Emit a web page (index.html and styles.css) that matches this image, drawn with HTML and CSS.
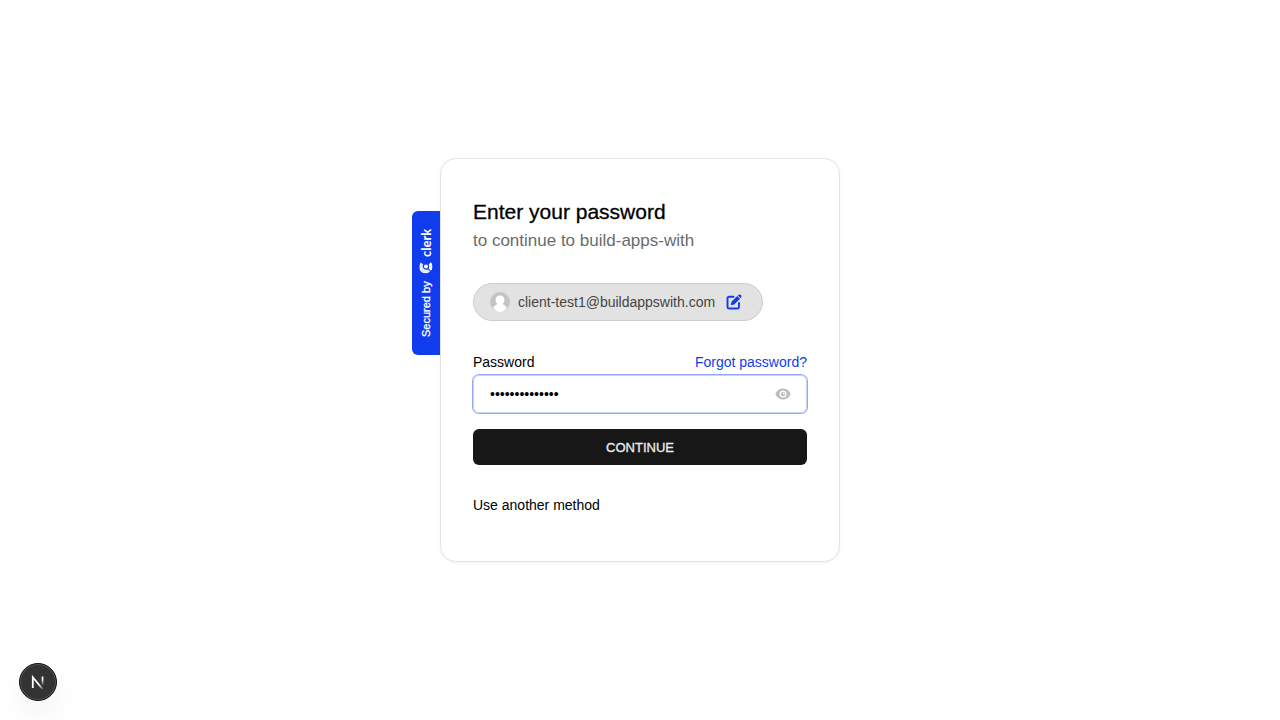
FILE: index.html
```html
<!DOCTYPE html>
<html lang="en">
<head>
<meta charset="utf-8">
<meta name="viewport" content="width=device-width, initial-scale=1">
<title>Sign in</title>
<link rel="stylesheet" href="styles.css">
</head>
<body>
<main class="page">
  <section class="card">
    <div class="badge">
      <span class="badge-text">Secured by</span>
      <a class="clerk" href="#" aria-label="clerk">
        <svg class="clerk-mark" viewBox="0 0 14 14" aria-hidden="true">
          <circle cx="7" cy="7" r="2.2" fill="#fff"/>
          <path d="M11.400 1.500A7 7 0 0 0 1.500 11.400L4 9.200A3.800 3.800 0 0 1 9.200 4Z" fill="#fff" opacity=".9"/>
          <path d="M11.700 12.300A7 7 0 0 1 2.300 12.300L4.900 9.900A3.800 3.800 0 0 0 9.100 9.900Z" fill="#fff"/>
        </svg>
        <span class="clerk-word">clerk</span>
      </a>
    </div>
    <header class="head">
      <h1 class="title">Enter your password</h1>
      <p class="subtitle">to continue to build-apps-with</p>
    </header>
    <div class="identity">
      <svg class="avatar" viewBox="0 0 20 20" aria-hidden="true">
        <circle cx="10" cy="10" r="10" fill="#c4c4c4"/>
        <path d="M10 3.500C7.300 3.500 5.500 5.400 5.600 8c.1 1.800.8 3.200 1.700 4-.4.8-3 1.200-4.300 3.700C5 18.400 7.400 20 10 20s5-1.600 7-4.300c-1.300-2.500-3.900-2.900-4.300-3.700.9-.8 1.600-2.200 1.700-4 .1-2.600-1.700-4.500-4.400-4.500Z" fill="#fff"/>
      </svg>
      <span class="email">client-test1@buildappswith.com</span>
      <button class="icon-button edit" type="button" aria-label="Edit">
        <svg class="edit-icon" viewBox="0 0 16 16" aria-hidden="true">
          <path d="M7.500 2.700H3A1.500 1.500 0 0 0 1.500 4.200v8.800A1.500 1.500 0 0 0 3 14.500h8.500A1.500 1.500 0 0 0 13 13V9" fill="none" stroke="#103cee" stroke-width="1.900" stroke-linecap="round"/>
          <path d="M4.800 11.200l.7-3.400L11.300 2l2.700 2.700L8.200 10.500Z" fill="#103cee"/>
          <path d="M11.900 1.500l.7-.7a1.900 1.900 0 0 1 2.600 2.600l-.7.7Z" fill="#103cee"/>
        </svg>
      </button>
    </div>
    <form class="form">
      <div class="label-row">
        <label for="password">Password</label>
        <a class="forgot" href="#">Forgot password?</a>
      </div>
      <div class="field">
        <input class="input" id="password" type="password" value="abcdefghijklmn">
        <button class="icon-button" type="button" aria-label="Show password">
          <svg class="eye" viewBox="0 0 16 16" aria-hidden="true">
            <path d="M8 2.500C4.500 2.500 1.600 4.800.4 8c1.200 3.200 4.100 5.500 7.600 5.500s6.400-2.300 7.600-5.500C14.400 4.800 11.500 2.500 8 2.500Z" fill="#bcbcbc"/>
            <circle cx="8" cy="8" r="2.900" fill="#bcbcbc" stroke="#fff" stroke-width="1.400"/>
            <circle cx="8.600" cy="7.400" r=".9" fill="#fff"/>
          </svg>
        </button>
      </div>
      <button class="submit" type="submit">CONTINUE</button>
    </form>
    <a class="other" href="#">Use another method</a>
  </section>
</main>
<button class="devtools" type="button" aria-label="Open developer tools">
  <svg class="devtools-icon" viewBox="0 0 36 36" aria-hidden="true">
    <defs>
      <linearGradient id="fade" x1="0" y1="0" x2="0" y2="1">
        <stop offset=".3" stop-color="#fff"/><stop offset="1" stop-color="#fff" stop-opacity="0"/>
      </linearGradient>
      <linearGradient id="tail" gradientUnits="userSpaceOnUse" x1="18" y1="18" x2="23" y2="25">
        <stop offset=".3" stop-color="#fff"/><stop offset="1" stop-color="#fff" stop-opacity=".2"/>
      </linearGradient>
    </defs>
    <path d="M12.800 24V13.300L22.500 25" fill="none" stroke="url(#tail)" stroke-width="1.800"/>
    <rect x="21.700" y="12.500" width="1.700" height="9.500" fill="url(#fade)"/>
  </svg>
</button>
</body>
</html>
```
FILE: styles.css
```css
* { box-sizing: border-box; }
body {
  margin: 0;
  background: #fff;
  color: #000;
  font-family: "Liberation Sans", Arial, sans-serif;
  font-size: 14px;
  line-height: 18px;
}
a { text-decoration: none; }
.page {
  min-height: 100vh;
  display: flex;
  align-items: center;
  justify-content: center;
}
.card {
  position: relative;
  width: 100%;
  max-width: 400px;
  padding: 36px 32px 47px;
  border: 1px solid #e4e4e4;
  border-radius: 16px;
  background: #fff;
  box-shadow: 0 1px 3px rgba(0, 0, 0, .06);
}
.badge {
  position: absolute;
  top: 52px;
  right: calc(100% + 1px);
  width: 28px;
  height: 144px;
  display: flex;
  align-items: center;
  justify-content: center;
  gap: 8px;
  writing-mode: vertical-rl;
  transform: rotate(180deg);
  border-radius: 0 6px 6px 0;
  background: #103cee;
  color: #fff;
  line-height: 14px;
}
.badge-text { font-size: 11px; -webkit-text-stroke: .3px #fff; }
.clerk { display: flex; align-items: center; gap: 3px; color: #fff; }
.clerk-mark { width: 14px; height: 13px; transform: rotate(90deg); }
.clerk-word { font: bold 13px/14px Lato, "Liberation Sans", sans-serif; }
.title { margin: 0; font-size: 21px; font-weight: 400; line-height: 34px; -webkit-text-stroke: .3px #000; }
.subtitle { margin: 0; color: #6b6b6b; font-size: 17px; line-height: 24px; }
.identity {
  display: inline-flex;
  align-items: center;
  margin-top: 30px;
  padding: 8px 20px 8px 16px;
  border: 1px solid #cdcdcd;
  border-radius: 19px;
  background: #e2e2e2;
  color: #454545;
}
.avatar { width: 20px; height: 20px; margin-right: 8px; }
.icon-button {
  display: flex;
  padding: 0;
  border: 0;
  background: none;
}
.edit { margin-left: 11px; }
.edit-icon, .eye { width: 16px; height: 16px; }
.form { margin-top: 32px; }
.label-row { display: flex; justify-content: space-between; margin-bottom: 4px; }
.forgot { color: #103cee; }
.field {
  display: flex;
  align-items: center;
  height: 38px;
  padding: 0 15px 0 16px;
  border: 1px solid #c8d2f8;
  border-radius: 6px;
  box-shadow: 0 0 0 1px #94a7f4;
}
.input {
  flex: 1;
  min-width: 0;
  padding: 0;
  border: 0;
  outline: 0;
  background: none;
  font: inherit;
}
.submit {
  width: 100%;
  height: 36px;
  margin-top: 16px;
  border: 0;
  border-radius: 6px;
  background: #171717;
  color: #ececec;
  font: 13px "Liberation Sans", Arial, sans-serif;
  -webkit-text-stroke: .3px #ececec;
}
.other { display: block; margin-top: 31px; color: #000; }
.devtools {
  position: fixed;
  bottom: 19px;
  left: 19px;
  width: 38px;
  height: 38px;
  padding: 0;
  border: 1px solid #111;
  border-radius: 50%;
  background: #333;
  box-shadow: inset 0 0 0 1px #555, 0 16px 32px -8px rgba(0, 0, 0, .14);
}
.devtools-icon { display: block; width: 36px; height: 36px; }
```
